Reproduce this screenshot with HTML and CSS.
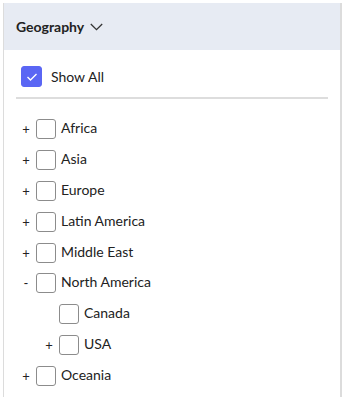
FILE: index.html
```html
<!DOCTYPE html>
<html>
<head>
<meta charset="utf-8">
<link rel="stylesheet" href="styles.css">
</head>
<body>
<div class="panel">
  <div class="header">
    <span class="title">Geography</span>
    <svg class="chev" width="13" height="8" viewBox="0 0 13 8"><path d="M0.8 1 L6.5 6.7 L12.2 1" fill="none" stroke="#333" stroke-width="1.3"/></svg>
  </div>
  <div class="showall">
    <span class="box checked"><svg width="12" height="10" viewBox="0 0 12 10"><path d="M1.5 5 L4.5 8 L10.5 2" fill="none" stroke="#fff" stroke-width="1.4"/></svg></span>
    <span class="label">Show All</span>
  </div>
  <div class="sep"></div>
  <ul class="tree">
    <li class="row"><span class="tog">+</span><span class="box"></span><span class="label">Africa</span></li>
    <li class="row"><span class="tog">+</span><span class="box"></span><span class="label">Asia</span></li>
    <li class="row"><span class="tog">+</span><span class="box"></span><span class="label">Europe</span></li>
    <li class="row"><span class="tog">+</span><span class="box"></span><span class="label">Latin America</span></li>
    <li class="row"><span class="tog">+</span><span class="box"></span><span class="label">Middle East</span></li>
    <li class="row"><span class="tog">-</span><span class="box"></span><span class="label">North America</span></li>
    <li class="row child"><span class="tog"></span><span class="box"></span><span class="label">Canada</span></li>
    <li class="row child"><span class="tog">+</span><span class="box"></span><span class="label">USA</span></li>
    <li class="row"><span class="tog">+</span><span class="box"></span><span class="label">Oceania</span></li>
  </ul>
</div>
</body>
</html>
```
FILE: styles.css
```css
html, body {
  margin: 0;
  padding: 0;
  background: #fff;
}
body {
  padding: 3px 0 0 3px;
  font-family: Lato, "Liberation Sans", sans-serif;
  color: #222;
  font-size: 14px;
}
.panel {
  width: 336px;
  height: 394px;
  border-left: 1px solid #dcdcdc;
  border-right: 2px solid #dcdcdc;
  box-sizing: content-box;
}
.header {
  height: 47px;
  background: #e7ebf3;
  display: flex;
  align-items: center;
  padding-left: 12px;
}
.title {
  font-weight: 700;
  font-size: 14px;
  color: #222;
}
.chev {
  margin-left: 6px;
  margin-top: 1px;
}
.showall {
  display: flex;
  align-items: center;
  padding: 16px 0 0 17px;
  height: 21px;
}
.box {
  width: 20px;
  height: 20px;
  box-sizing: border-box;
  border: 1.5px solid #8c8c8c;
  border-radius: 3px;
  display: inline-flex;
  align-items: center;
  justify-content: center;
  flex: none;
}
.box.checked {
  background: #5a66f4;
  border-color: #5a66f4;
  width: 21px;
  height: 21px;
}
.showall .label {
  margin-left: 9px;
  margin-top: -1px;
}
.sep {
  margin: 10px 12px 0 12px;
  height: 2px;
  background: #dddddd;
}
.tree {
  list-style: none;
  margin: 0;
  padding: 15px 0 0 15px;
}
.row {
  display: flex;
  align-items: center;
  height: 30.8px;
}
.row.child {
  padding-left: 23px;
}
.tog {
  width: 14px;
  text-align: center;
  margin-right: 3px;
  font-size: 13px;
}
.row .label {
  margin-left: 5px;
  margin-top: -3px;
}
```
